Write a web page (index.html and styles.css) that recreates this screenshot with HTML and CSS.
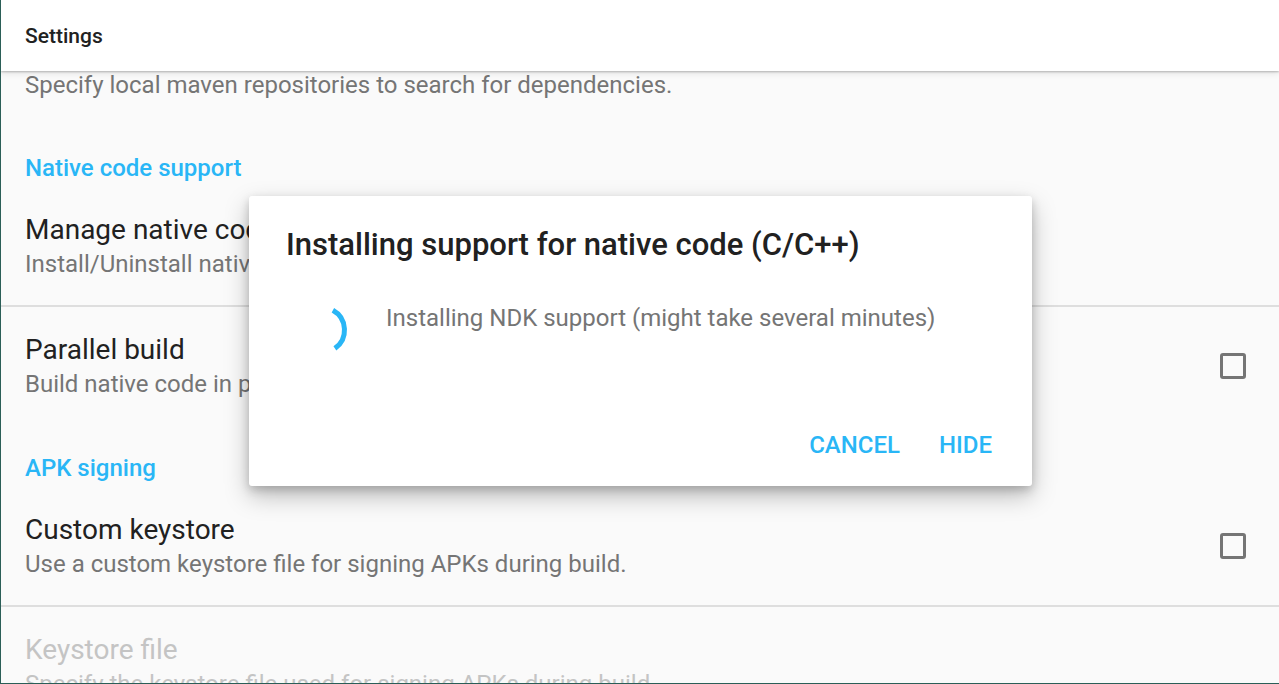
FILE: index.html
```html
<!DOCTYPE html>
<html>
<head>
<meta charset="utf-8">
<link rel="stylesheet" href="styles.css">
</head>
<body>
<div class="screen">
  <header class="appbar">Settings</header>
  <main class="list">
    <div class="item first">
      <div class="summary">Specify local maven repositories to search for dependencies.</div>
    </div>
    <div class="category">Native code support</div>
    <div class="item divided">
      <div class="text">
        <div class="title">Manage native code</div>
        <div class="summary">Install/Uninstall native code support (C/C++)</div>
      </div>
    </div>
    <div class="item">
      <div class="text">
        <div class="title">Parallel build</div>
        <div class="summary">Build native code in parallel using multiple threads.</div>
      </div>
      <span class="checkbox"></span>
    </div>
    <div class="category">APK signing</div>
    <div class="item divided">
      <div class="text">
        <div class="title">Custom keystore</div>
        <div class="summary">Use a custom keystore file for signing APKs during build.</div>
      </div>
      <span class="checkbox"></span>
    </div>
    <div class="item disabled">
      <div class="text">
        <div class="title">Keystore file</div>
        <div class="summary">Specify the keystore file used for signing APKs during build.</div>
      </div>
    </div>
  </main>

  <div class="dialog">
    <div class="dialog-title">Installing support for native code (C/C++)</div>
    <div class="dialog-body">
      <svg class="spinner" width="48" height="48" viewBox="0 0 48 48">
        <path d="M26.9 16.3 A22.5 22.5 0 0 1 28.9 54.4" fill="none" stroke="#29b6f6" stroke-width="5" stroke-linecap="butt"/>
      </svg>
      <div class="dialog-msg">Installing NDK support (might take several minutes)</div>
    </div>
    <div class="dialog-actions">
      <span class="btn">CANCEL</span>
      <span class="btn">HIDE</span>
    </div>
  </div>
</div>
</body>
</html>
```

FILE: styles.css
```css
html, body {
  margin: 0;
  padding: 0;
}
body {
  font-family: Roboto, "Liberation Sans", sans-serif;
  background: #fafafa;
}
.screen {
  position: relative;
  width: 1279px;
  height: 684px;
  box-sizing: border-box;
  border-left: 1px solid #2b5e57;
  border-bottom: 1px solid #2b5e57;
  display: flex;
  flex-direction: column;
  overflow: hidden;
  background: #fafafa;
}
.appbar {
  position: relative;
  z-index: 2;
  flex: 0 0 71px;
  display: flex;
  align-items: center;
  padding-left: 24px;
  background: #fff;
  font-size: 21px;
  font-weight: 500;
  color: #212121;
  box-shadow: 0 1px 2px rgba(0,0,0,0.25), 0 3px 6px rgba(0,0,0,0.08);
}
.list {
  flex: 1;
  overflow: hidden;
}
.item {
  display: flex;
  align-items: center;
  padding: 26px 33px 26px 24px;
}
.item.first {
  padding-top: 0;
}
.item.divided {
  border-bottom: 2px solid #dedede;
}
.text {
  flex: 1;
  min-width: 0;
}
.title {
  font-size: 28px;
  line-height: 34px;
  color: #212121;
  white-space: nowrap;
}
.summary {
  margin-top: 2px;
  font-size: 24px;
  line-height: 30px;
  color: #757575;
  white-space: nowrap;
}
.item.first .summary {
  margin-top: 0;
  line-height: 28px;
}
.disabled .title,
.disabled .summary {
  color: #c4c4c4;
}
.category {
  padding: 29px 24px 5px;
  font-size: 24px;
  line-height: 28px;
  font-weight: 500;
  color: #29b6f6;
}
.checkbox {
  flex: 0 0 auto;
  width: 20px;
  height: 20px;
  border: 3px solid #757575;
  border-radius: 3px;
}
.dialog {
  position: absolute;
  left: 248px;
  top: 196px;
  width: 783px;
  height: 290px;
  box-sizing: border-box;
  background: #fff;
  border-radius: 3px;
  box-shadow: 0 10px 24px rgba(0,0,0,0.25), 0 4px 10px rgba(0,0,0,0.18);
  padding: 31px 40px 0 37px;
  display: flex;
  flex-direction: column;
}
.dialog-title {
  font-size: 31px;
  line-height: 36px;
  font-weight: 500;
  color: #212121;
  white-space: nowrap;
}
.dialog-body {
  display: flex;
  align-items: center;
  margin-top: 31px;
  height: 48px;
}
.spinner {
  margin-left: 20px;
  flex: 0 0 auto;
  overflow: visible;
}
.dialog-msg {
  margin-left: 32px;
  font-size: 24px;
  color: #757575;
  white-space: nowrap;
}
.dialog-actions {
  display: flex;
  justify-content: flex-end;
  gap: 39px;
  margin-top: 89px;
}
.btn {
  font-size: 24px;
  line-height: 28px;
  font-weight: 500;
  color: #29b6f6;
}
```
